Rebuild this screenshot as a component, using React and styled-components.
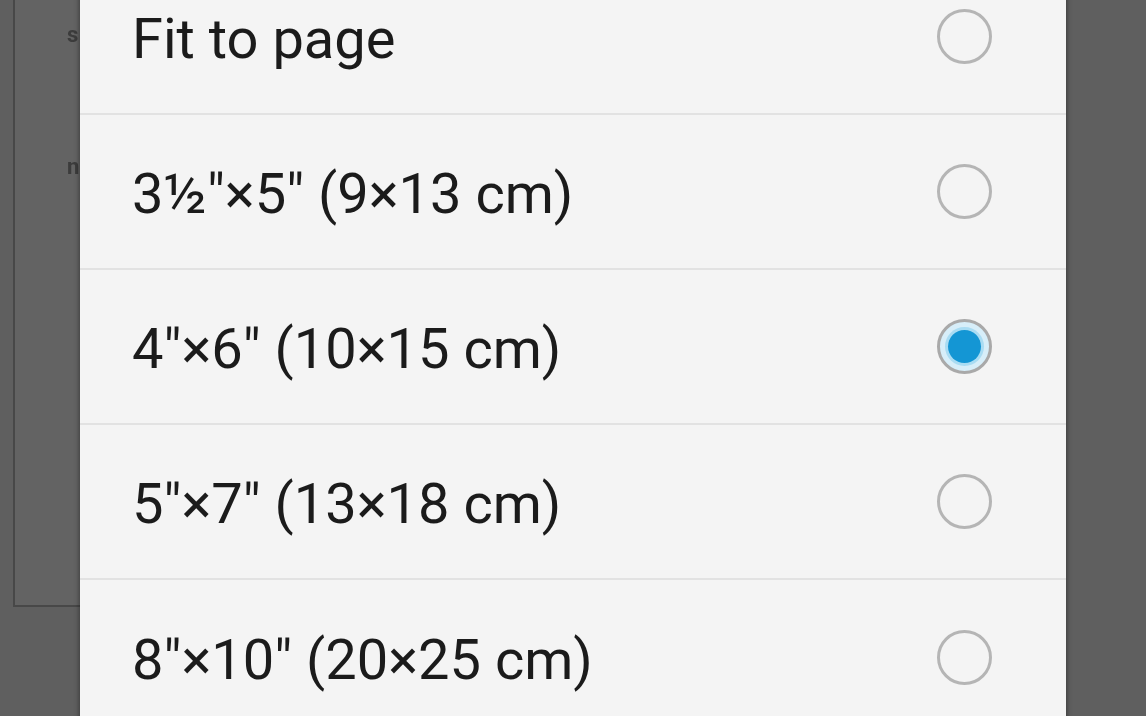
import React from "react";
import styled, { createGlobalStyle } from "styled-components";

const Global = createGlobalStyle`
  html, body { margin: 0; padding: 0; }
  body {
    width: 1146px;
    height: 716px;
    overflow: hidden;
    background: #5f5f5f;
    font-family: Roboto, "Noto Sans", "Liberation Sans", sans-serif;
  }
`;

const Screen = styled.div`
  position: relative;
  width: 1146px;
  height: 716px;
  overflow: hidden;
  background: #5f5f5f;
`;

const Page = styled.div`
  margin-left: 13px;
  width: 300px;
  height: 607px;
  box-sizing: border-box;
  border-left: 2px solid #484848;
  border-bottom: 2px solid #484848;
  background: #636363;
  display: flex;
  flex-direction: column;
  gap: 110px;
  padding: 24px 0 0 52px;
`;

const PageText = styled.span`
  font-family: Roboto, "Liberation Sans", sans-serif;
  font-weight: 700;
  font-size: 22px;
  line-height: 22px;
  color: #3c3c3c;
  filter: blur(0.6px);
`;

const Dialog = styled.div`
  position: absolute;
  left: 80px;
  top: -40px;
  width: 986px;
  background: #f4f4f4;
  box-shadow: -2px 0 4px rgba(0, 0, 0, 0.25), 2px 0 4px rgba(0, 0, 0, 0.25);
  display: flex;
  flex-direction: column;
`;

const Row = styled.div`
  height: 155px;
  box-sizing: border-box;
  display: flex;
  align-items: center;
  justify-content: space-between;
  padding: 0 74px 0 52px;
  border-bottom: 2px solid #e2e2e2;
  &:last-child { border-bottom: none; }
`;

const Label = styled.span`
  font-family: Roboto, "Noto Sans", sans-serif;
  font-size: 56px;
  color: #1b1b1b;
  padding-top: 4px;
`;

const Radio = styled.span`
  width: 55px;
  height: 55px;
  box-sizing: border-box;
  border-radius: 50%;
  border: 3px solid ${(p) => (p.$checked ? "#a9a9a9" : "#b5b5b5")};
  display: flex;
  align-items: center;
  justify-content: center;
  background: ${(p) => (p.$checked ? "#d7eef9" : "transparent")};
`;

const Dot = styled.span`
  width: 33px;
  height: 33px;
  border-radius: 50%;
  background: #1496d4;
  box-shadow: 0 0 0 3px #a9dcf3;
`;

const options = [
  { label: "Fit to page" },
  { label: "3½\"×5\" (9×13 cm)" },
  { label: "4\"×6\" (10×15 cm)", checked: true },
  { label: "5\"×7\" (13×18 cm)" },
  { label: "8\"×10\" (20×25 cm)" },
];

export default function App() {
  return (
    <Screen>
      <Global />
      <Page>
        <PageText>s</PageText>
        <PageText>n</PageText>
      </Page>
      <Dialog>
        {options.map((o) => (
          <Row key={o.label}>
            <Label>{o.label}</Label>
            <Radio $checked={o.checked}>{o.checked && <Dot />}</Radio>
          </Row>
        ))}
      </Dialog>
    </Screen>
  );
}
